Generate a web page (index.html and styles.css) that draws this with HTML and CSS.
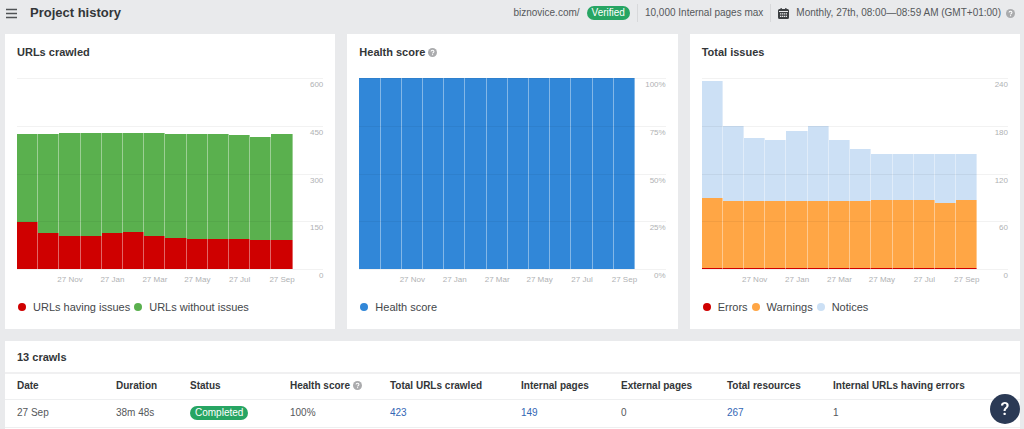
FILE: index.html
```html
<!DOCTYPE html>
<html lang="en">
<head>
<meta charset="utf-8">
<meta name="viewport" content="width=device-width, initial-scale=1">
<title>Project history</title>
<link rel="stylesheet" href="styles.css">
</head>
<body>
<svg class="sprite" aria-hidden="true">
  <symbol id="hint" viewBox="0 0 16 16">
    <circle cx="8" cy="8" r="8" fill="#aaabad"/>
    <path d="M5.4 6.4C5.4 4.7 6.500 3.900 8 3.900s2.600.900 2.600 2.300c0 1.700-2.400 1.800-2.400 3.500" fill="none" stroke="#fff" stroke-width="1.800"/>
    <rect x="7.200" y="10.900" width="1.900" height="1.900" fill="#fff"/>
  </symbol>
</svg>

<header class="topbar">
  <button class="menu" type="button" aria-label="Menu">
    <svg viewBox="0 0 12 12" width="12" height="12"><path d="M0 2.500h11M0 6.500h11M0 10.500h11" stroke="#505355" stroke-width="1.700"/></svg>
  </button>
  <h1 class="page-title">Project history</h1>
  <div class="meta">
    <span class="meta-item">biznovice.com/ <span class="badge">Verified</span></span>
    <span class="meta-item meta-split">10,000 Internal pages max</span>
    <span class="meta-item meta-split">
      <svg class="calendar" viewBox="0 0 11 11" width="11" height="11">
        <path d="M1.500 1h1V0h1.300v1h3.400V0h1.300v1h1q1.500 0 1.500 1.500v7q0 1.500-1.500 1.500h-8Q0 11 0 9.500v-7Q0 1 1.500 1Z" fill="#3c3f42"/>
        <path d="M1 3.500h9" stroke="#e9eaec"/>
        <path d="M2 5.800h7M2 8.400h7" stroke="#e9eaec" stroke-width="1.200" stroke-dasharray="1.300 .6"/>
      </svg>
      Monthly, 27th, 08:00—08:59 AM (GMT+01:00)
      <svg class="hint" role="img" aria-label="Help"><use href="#hint"/></svg>
    </span>
  </div>
</header>

<main class="content">
  <div class="cards">
    <section class="card">
      <h2 class="card-title">URLs crawled</h2>
      <div class="chart" data-chart="urls"></div>
      <ul class="legend">
        <li class="key red">URLs having issues</li>
        <li class="key green">URLs without issues</li>
      </ul>
    </section>
    <section class="card">
      <h2 class="card-title">Health score <svg class="hint" role="img" aria-label="Help"><use href="#hint"/></svg></h2>
      <div class="chart" data-chart="health"></div>
      <ul class="legend">
        <li class="key blue">Health score</li>
      </ul>
    </section>
    <section class="card">
      <h2 class="card-title">Total issues</h2>
      <div class="chart" data-chart="issues"></div>
      <ul class="legend">
        <li class="key red">Errors</li>
        <li class="key orange">Warnings</li>
        <li class="key pale">Notices</li>
      </ul>
    </section>
  </div>

  <section class="crawls">
    <h2 class="crawls-title">13 crawls</h2>
    <table class="crawl-table">
      <colgroup>
        <col class="c-date"><col class="c-duration"><col class="c-count"><col class="c-count"><col class="c-total"><col class="c-count"><col class="c-wide"><col class="c-wide"><col>
      </colgroup>
      <thead>
        <tr>
          <th scope="col">Date</th>
          <th scope="col">Duration</th>
          <th scope="col">Status</th>
          <th scope="col">Health score <svg class="hint" role="img" aria-label="Help"><use href="#hint"/></svg></th>
          <th scope="col">Total URLs crawled</th>
          <th scope="col">Internal pages</th>
          <th scope="col">External pages</th>
          <th scope="col">Total resources</th>
          <th scope="col">Internal URLs having errors</th>
        </tr>
      </thead>
      <tbody>
        <tr>
          <td>27 Sep</td>
          <td>38m 48s</td>
          <td><span class="badge">Completed</span></td>
          <td>100%</td>
          <td><a href="#total">423</a></td>
          <td><a href="#internal">149</a></td>
          <td>0</td>
          <td><a href="#resources">267</a></td>
          <td>1</td>
        </tr>
      </tbody>
    </table>
  </section>
</main>

<button class="help" type="button" aria-label="Help">?</button>
<script src="charts.js"></script>
</body>
</html>
```
FILE: styles.css
```css
* {
  box-sizing: border-box;
}

body {
  display: flex;
  flex-direction: column;
  min-height: 100vh;
  margin: 0;
  background: #e9eaec;
  color: #55585b;
  font: 10px/16px "Liberation Sans", Arial, sans-serif;
}

h1,
h2,
ul {
  margin: 0;
  padding: 0;
}

button {
  padding: 0;
  border: 0;
  font: inherit;
}

.sprite {
  position: absolute;
  width: 0;
  height: 0;
}

.hint {
  width: 9px;
  height: 9px;
  vertical-align: -1px;
}

.topbar {
  display: flex;
  align-items: center;
  padding: 4px 9px 12px 6px;
}

.menu {
  display: flex;
  margin-right: 12px;
  background: none;
}

.page-title {
  color: #333638;
  font-size: 13px;
  font-weight: bold;
  line-height: 18px;
}

.meta {
  display: flex;
  align-items: center;
  margin-left: auto;
}

.meta-item {
  display: flex;
  align-items: center;
  gap: 7px;
  line-height: 18px;
}

.meta-item .hint {
  margin-left: -2px;
}

.meta-split {
  margin-left: 7px;
  padding-left: 7px;
  border-left: 1px solid #d8d9db;
}

.badge {
  display: inline-block;
  padding: 0 5px;
  border-radius: 8px;
  background: #27a563;
  color: #fff;
  font-size: 10px;
  line-height: 14px;
}

.content {
  display: flex;
  flex: 1;
  flex-direction: column;
  gap: 12px;
  padding: 0 4px 0 5px;
}

.cards {
  display: grid;
  grid-template-columns: repeat(3, 1fr);
  gap: 12px;
}

.card {
  padding: 10px 12px 14px;
  background: #fff;
}

.card-title,
.crawls-title {
  color: #333638;
  font-size: 11px;
  font-weight: bold;
  line-height: 16px;
}

.chart {
  margin-top: 18px;
  color: #b0b2b4;
  font-size: 8px;
  line-height: 12px;
}

.plot {
  display: grid;
  height: 191px;
}

.bars,
.gridlines {
  grid-area: 1 / 1;
}

.bars,
.dates {
  display: grid;
  grid-template-columns: repeat(13, minmax(0, 1fr));
  width: 90%;
}

.bar {
  display: flex;
  flex-direction: column;
  justify-content: flex-end;
}

.gridlines {
  z-index: 1;
  display: grid;
  grid-template-rows: repeat(4, 1fr);
}

.gridline,
.axis {
  border-top: 1px solid #0000000d;
  text-align: right;
}

.axis {
  display: flex;
  justify-content: space-between;
}

.dates {
  padding-top: 4px;
}

.date {
  display: flex;
  justify-content: center;
  white-space: nowrap;
}

.legend {
  display: flex;
  gap: 4px;
  margin-top: 13px;
  padding-left: 1px;
  color: #44474a;
  font-size: 11px;
  list-style: none;
}

.key {
  display: flex;
  align-items: center;
  gap: 7px;
}

.key::before {
  width: 8px;
  height: 8px;
  border-radius: 50%;
  background: var(--tone);
  content: "";
}

.segment {
  border-right: 1px solid #ffffff66;
  background: var(--tone);
}

.red {
  --tone: #cf0000;
}

.green {
  --tone: #5ab04e;
}

.blue {
  --tone: #3187d8;
}

.orange {
  --tone: #ffa645;
}

.pale {
  --tone: #cce0f5;
}

.crawls {
  flex: 1;
  background: #fff;
}

.crawls-title {
  padding: 8px 12px 7px;
}

.crawl-table {
  width: 100%;
  border-collapse: collapse;
  table-layout: fixed;
  border-top: 2px solid #f0f0f1;
}

.crawl-table th,
.crawl-table td {
  padding: 0;
  border-bottom: 1px solid #eeeff0;
  text-align: left;
  white-space: nowrap;
}

.crawl-table th {
  height: 26px;
  color: #333638;
  font-weight: bold;
}

.crawl-table td {
  height: 28px;
}

.crawl-table th:first-child,
.crawl-table td:first-child {
  padding-left: 12px;
}

.crawl-table a {
  color: #3467b5;
  text-decoration: none;
}

.c-date {
  width: 111px;
}

.c-duration {
  width: 74px;
}

.c-count {
  width: 100px;
}

.c-total {
  width: 131px;
}

.c-wide {
  width: 106px;
}

.help {
  position: fixed;
  right: 4px;
  bottom: 5px;
  width: 30px;
  height: 30px;
  border-radius: 50%;
  background: #2b3a55;
  color: #fff;
  font: 500 18px/30px Roboto, sans-serif;
}
```
FILE: charts.js
```js
const dates = ["", "", "27 Nov", "", "27 Jan", "", "27 Mar", "", "27 May", "", "27 Jul", "", "27 Sep"];

// Series are stacked from the baseline upwards.
const charts = {
  urls: {
    max: 600,
    ticks: ["600", "450", "300", "150", "0"],
    series: [
      ["red", [149, 113, 104, 104, 112, 117, 104, 98, 94, 94, 94, 92, 92]],
      ["green", [276, 312, 323, 323, 315, 310, 323, 327, 331, 331, 328, 322, 331]]
    ]
  },
  health: {
    max: 100,
    ticks: ["100%", "75%", "50%", "25%", "0%"],
    series: [["blue", Array(13).fill(100)]]
  },
  issues: {
    max: 240,
    ticks: ["240", "180", "120", "60", "0"],
    series: [
      ["red", Array(13).fill(1)],
      ["orange", [88, 85, 85, 85, 85, 85, 85, 85, 86, 86, 86, 82, 86]],
      ["pale", [147, 94, 79, 76, 88, 94, 76, 65, 58, 58, 58, 62, 58]]
    ]
  }
};

for (const node of document.querySelectorAll("[data-chart]")) {
  const { max, ticks, series } = charts[node.dataset.chart];
  const bars = dates.map((_, i) => {
    const segments = [...series].reverse().map(([tone, values]) =>
      `<div class="segment ${tone}" style="height:${values[i] / max * 100}%"></div>`);
    return `<div class="bar">${segments.join("")}</div>`;
  });
  node.innerHTML = `
    <div class="plot">
      <div class="bars">${bars.join("")}</div>
      <div class="gridlines">${ticks.slice(0, 4).map(t => `<div class="gridline">${t}</div>`).join("")}</div>
    </div>
    <div class="axis">
      <div class="dates">${dates.map(d => `<span class="date">${d}</span>`).join("")}</div>
      <span>${ticks[4]}</span>
    </div>`;
}
```
